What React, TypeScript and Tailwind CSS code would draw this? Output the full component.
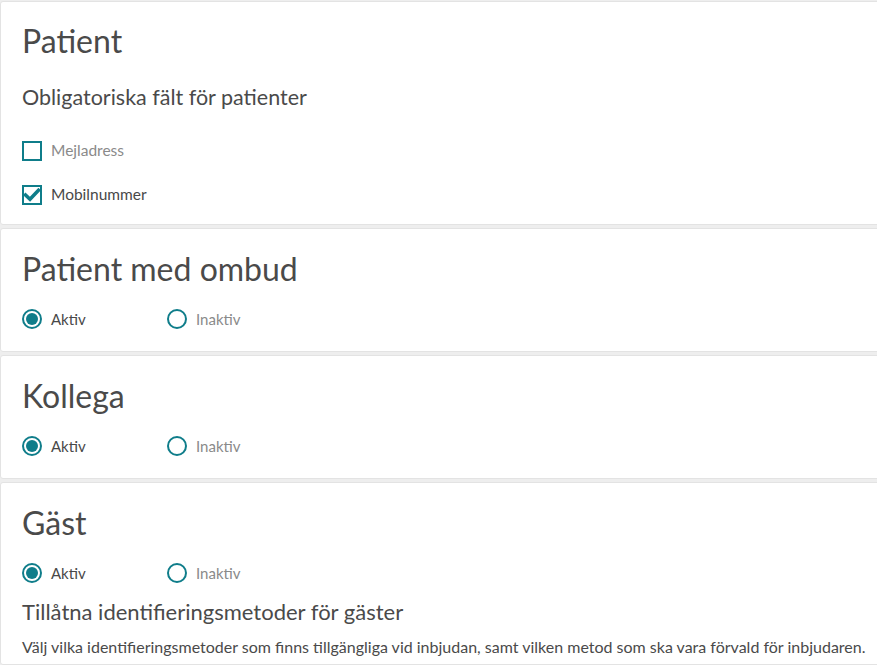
import { useState } from 'react';

const TEAL = '#0f7d8a';

function Checkbox({ checked, label, onChange }: { checked: boolean; label: string; onChange: () => void }) {
  return (
    <label className="flex items-center gap-[9px] cursor-pointer select-none">
      <span className="w-[20px] h-[20px] border-2 border-[#0f7d8a] flex items-center justify-center bg-white">
        {checked && (
          <svg width="16" height="14" viewBox="0 0 16 14">
            <path d="M1.5 7 L6 11.3 L14.5 2.3" fill="none" stroke={TEAL} strokeWidth="3.6" strokeLinecap="square" />
          </svg>
        )}
      </span>
      <input type="checkbox" className="hidden" checked={checked} onChange={onChange} />
      <span className={checked ? 'text-[15.5px] text-[#484848]' : 'text-[15.5px] text-[#8a8a8a]'}>{label}</span>
    </label>
  );
}

function Radio({ checked, label, onClick }: { checked: boolean; label: string; onClick: () => void }) {
  return (
    <button type="button" onClick={onClick} className="flex items-center gap-[9px] w-[145px]">
      <span className="w-[20px] h-[20px] rounded-full border-2 border-[#0f7d8a] flex items-center justify-center">
        {checked && <span className="w-[12px] h-[12px] rounded-full bg-[#0f7d8a]"></span>}
      </span>
      <span className={checked ? 'text-[15px] text-[#484848]' : 'text-[15px] text-[#8a8a8a]'}>{label}</span>
    </button>
  );
}

function StatusToggle() {
  const [active, setActive] = useState(true);
  return (
    <div className="flex items-center">
      <Radio checked={active} label="Aktiv" onClick={() => setActive(true)} />
      <Radio checked={!active} label="Inaktiv" onClick={() => setActive(false)} />
    </div>
  );
}

function Card({ children, className }: { children: React.ReactNode; className: string }) {
  return (
    <div className={'bg-white border border-[#e3e3e3] rounded-[3px] mr-[-4px] pl-[21px] ' + className}>
      {children}
    </div>
  );
}

export default function App() {
  const [email, setEmail] = useState(false);
  const [mobile, setMobile] = useState(true);

  return (
    <div className="min-h-[665px] bg-[#eeeeee] flex flex-col gap-[3px] pt-px overflow-hidden text-[#4a4a4a]" style={{ fontFamily: 'Lato, "Noto Sans", sans-serif' }}>
      <Card className="h-[224px] pt-[19px]">
        <h2 className="text-[32px] leading-[40px]">Patient</h2>
        <p className="text-[21.5px] leading-[28px] mt-[22px]">Obligatoriska fält för patienter</p>
        <div className="flex flex-col gap-[21px] mt-[28px]">
          <Checkbox checked={email} label="Mejladress" onChange={() => setEmail(!email)} />
          <Checkbox checked={mobile} label="Mobilnummer" onChange={() => setMobile(!mobile)} />
        </div>
      </Card>

      <Card className="h-[124px] pt-[20px]">
        <h2 className="text-[32px] leading-[40px]">Patient med ombud</h2>
        <div className="mt-[19px]"><StatusToggle /></div>
      </Card>

      <Card className="h-[124px] pt-[20px]">
        <h2 className="text-[32px] leading-[40px]">Kollega</h2>
        <div className="mt-[19px]"><StatusToggle /></div>
      </Card>

      <Card className="flex-1 pt-[20px]">
        <h2 className="text-[32px] leading-[40px]">Gäst</h2>
        <div className="mt-[19px]"><StatusToggle /></div>
        <p className="text-[22px] leading-[28px] mt-[13px]">Tillåtna identifieringsmetoder för gäster</p>
        <p className="text-[16px] leading-[22px] mt-[10px]">
          Välj vilka identifieringsmetoder som finns tillgängliga vid inbjudan, samt vilken metod som ska vara förvald för inbjudaren.
        </p>
      </Card>
    </div>
  );
}
